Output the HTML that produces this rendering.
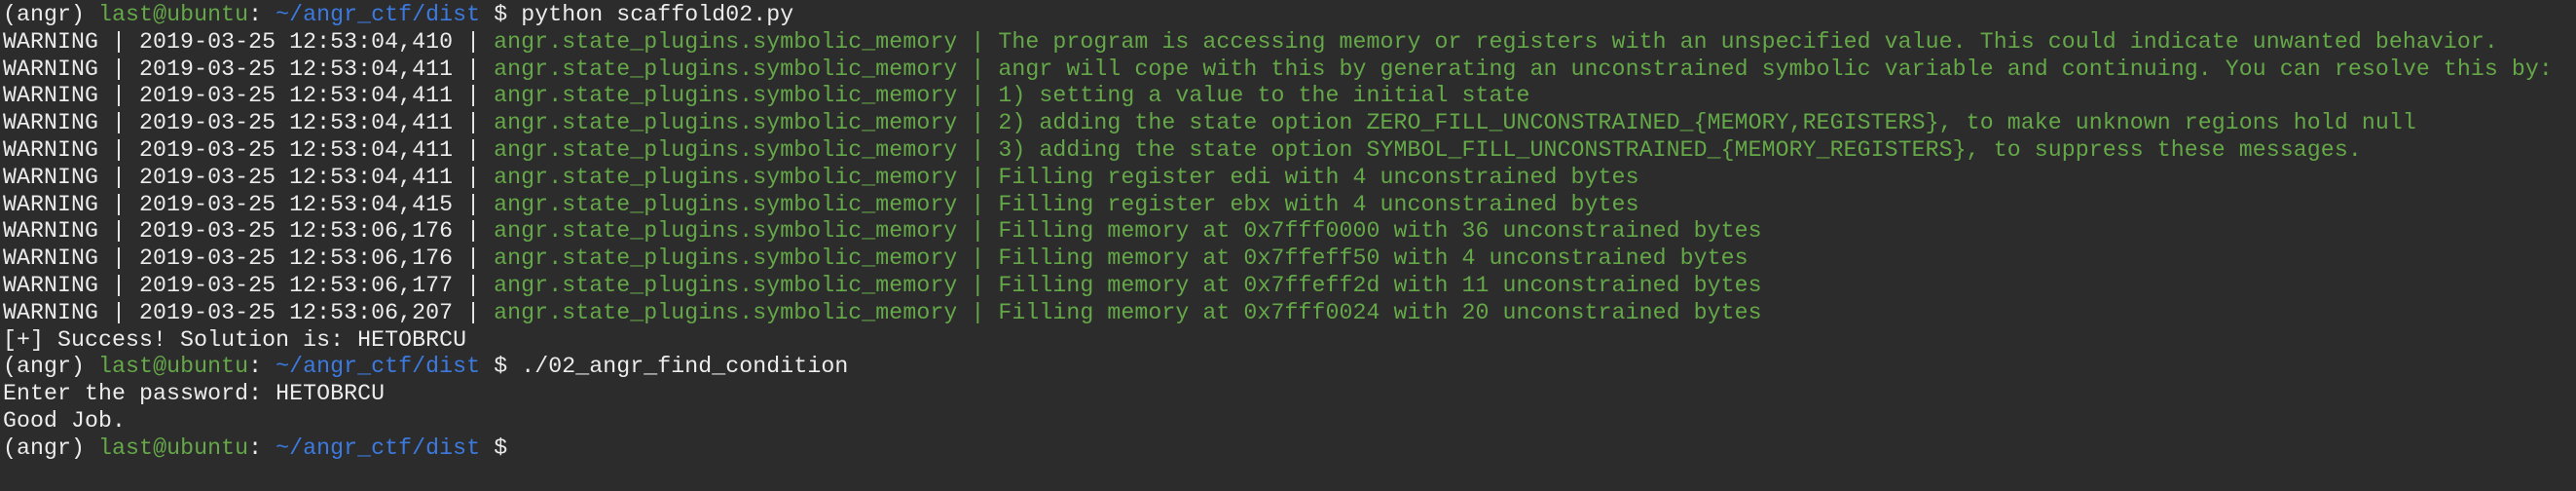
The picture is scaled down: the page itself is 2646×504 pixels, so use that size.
<!DOCTYPE html>
<html><head><meta charset="utf-8"><style>
html,body{margin:0;padding:0;background:#2c2c2c;width:2646px;height:504px;overflow:hidden}
pre{margin:0;padding:2px 0 0 3px;font-family:"Liberation Mono",monospace;font-size:23.2px;letter-spacing:0.09px;line-height:27.8px;color:#ececec;white-space:pre}
.g{color:#65a848}.b{color:#3c7ae0}
</style></head><body><pre>(angr) <span class="g">last@ubuntu</span>: <span class="b">~/angr_ctf/dist</span> $ python scaffold02.py
WARNING | 2019-03-25 12:53:04,410 | <span class="g">angr.state_plugins.symbolic_memory | The program is accessing memory or registers with an unspecified value. This could indicate unwanted behavior.</span>
WARNING | 2019-03-25 12:53:04,411 | <span class="g">angr.state_plugins.symbolic_memory | angr will cope with this by generating an unconstrained symbolic variable and continuing. You can resolve this by:</span>
WARNING | 2019-03-25 12:53:04,411 | <span class="g">angr.state_plugins.symbolic_memory | 1) setting a value to the initial state</span>
WARNING | 2019-03-25 12:53:04,411 | <span class="g">angr.state_plugins.symbolic_memory | 2) adding the state option ZERO_FILL_UNCONSTRAINED_{MEMORY,REGISTERS}, to make unknown regions hold null</span>
WARNING | 2019-03-25 12:53:04,411 | <span class="g">angr.state_plugins.symbolic_memory | 3) adding the state option SYMBOL_FILL_UNCONSTRAINED_{MEMORY_REGISTERS}, to suppress these messages.</span>
WARNING | 2019-03-25 12:53:04,411 | <span class="g">angr.state_plugins.symbolic_memory | Filling register edi with 4 unconstrained bytes</span>
WARNING | 2019-03-25 12:53:04,415 | <span class="g">angr.state_plugins.symbolic_memory | Filling register ebx with 4 unconstrained bytes</span>
WARNING | 2019-03-25 12:53:06,176 | <span class="g">angr.state_plugins.symbolic_memory | Filling memory at 0x7fff0000 with 36 unconstrained bytes</span>
WARNING | 2019-03-25 12:53:06,176 | <span class="g">angr.state_plugins.symbolic_memory | Filling memory at 0x7ffeff50 with 4 unconstrained bytes</span>
WARNING | 2019-03-25 12:53:06,177 | <span class="g">angr.state_plugins.symbolic_memory | Filling memory at 0x7ffeff2d with 11 unconstrained bytes</span>
WARNING | 2019-03-25 12:53:06,207 | <span class="g">angr.state_plugins.symbolic_memory | Filling memory at 0x7fff0024 with 20 unconstrained bytes</span>
[+] Success! Solution is: HETOBRCU
(angr) <span class="g">last@ubuntu</span>: <span class="b">~/angr_ctf/dist</span> $ ./02_angr_find_condition
Enter the password: HETOBRCU
Good Job.
(angr) <span class="g">last@ubuntu</span>: <span class="b">~/angr_ctf/dist</span> $
</pre></body></html>
